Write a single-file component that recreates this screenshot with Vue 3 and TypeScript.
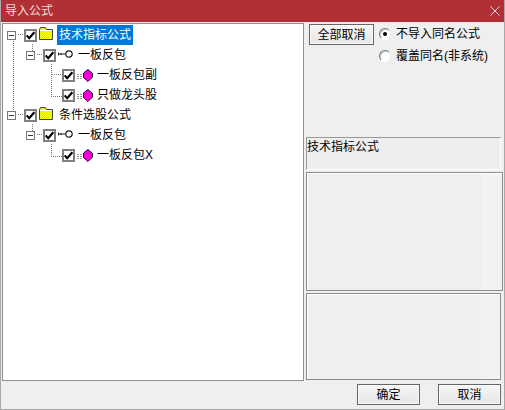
<script setup lang="ts">
interface Node { label: string; level: number; kind: 'folder' | 'key' | 'leaf'; expandable: boolean; selected?: boolean }
const nodes: Node[] = [
  { label: '技术指标公式', level: 0, kind: 'folder', expandable: true, selected: true },
  { label: '一板反包', level: 1, kind: 'key', expandable: true },
  { label: '一板反包副', level: 2, kind: 'leaf', expandable: false },
  { label: '只做龙头股', level: 2, kind: 'leaf', expandable: false },
  { label: '条件选股公式', level: 0, kind: 'folder', expandable: true },
  { label: '一板反包', level: 1, kind: 'key', expandable: true },
  { label: '一板反包X', level: 2, kind: 'leaf', expandable: false },
]
</script>

<template>
  <div class="dialog">
    <header class="titlebar">
      <span>导入公式</span>
      <svg class="close" width="10" height="10" viewBox="0 0 10 10"><path d="M0.5 0.5L9.5 9.5M9.5 0.5L0.5 9.5" stroke="#f0d8d8" fill="none" /></svg>
    </header>
    <div class="body">
      <div class="tree">
        <svg class="lines" width="120" height="160" viewBox="0 0 120 160">
          <g stroke="#777" stroke-dasharray="1 1" fill="none" shape-rendering="crispEdges">
            <path d="M10.5 15V92M15 10.5H21" />
            <path d="M29.5 20V28M34 30.5H40M48.5 40V72.5H59M48.5 50.5H59" />
            <path d="M29.5 100V108M15 90.5H21M34 110.5H40M48.5 120V132.5H59" />
          </g>
        </svg>
        <div v-for="(n, i) in nodes" :key="i" class="row" :class="`level${n.level}`">
          <span v-if="n.expandable" class="exp"><i></i></span>
          <span class="check">
            <svg width="9" height="9" viewBox="0 0 9 9"><path d="M0.6 4.4L3.2 7.2L8.4 1.2" stroke="#000" stroke-width="2.2" fill="none" /></svg>
          </span>
          <svg v-if="n.kind === 'folder'" class="ic folder" width="16" height="13" viewBox="0 0 16 13">
            <defs>
              <pattern :id="`dither${i}`" width="2" height="2" patternUnits="userSpaceOnUse">
                <rect width="2" height="2" fill="#ffff00" />
                <rect width="1" height="1" fill="#d8d870" />
                <rect x="1" y="1" width="1" height="1" fill="#d8d870" />
              </pattern>
            </defs>
            <path d="M1.5 2.5L2.5 0.5H7.5L8.5 2.5H14.5V12.5H1.5Z" :fill="`url(#dither${i})`" stroke="#444" />
            <path d="M2 3.5H14" stroke="#fff" />
          </svg>
          <svg v-else-if="n.kind === 'key'" class="ic key" width="16" height="10" viewBox="0 0 16 10">
            <circle cx="12" cy="5" r="3.2" fill="#fff" stroke="#222" stroke-width="1.2" />
            <path d="M1 5H9M1.5 3.5V6.5M4 4V6" stroke="#222" fill="none" />
          </svg>
          <svg v-else class="ic" width="17" height="13" viewBox="0 0 17 13">
            <path d="M1 5.5H7M1 7.5H7M1 9.5H7" stroke="#999" stroke-dasharray="2 1" />
            <path d="M12 0.5L16.5 4.5V8L12 12.5L7.5 8.5V4Z" fill="#ff00dd" stroke="#300040" />
            <path d="M12 1V5L16 5M12 5L8 4.5" stroke="#b000b0" fill="none" stroke-width="0.6" />
          </svg>
          <span class="label" :class="`label-${n.kind}`">
            <span :class="{ selected: n.selected }">{{ n.label }}</span>
          </span>
        </div>
      </div>
      <aside class="side">
        <div class="options">
          <button class="btn all">全部取消</button>
          <div class="radios">
            <label class="radio"><span class="dot on"></span>不导入同名公式</label>
            <label class="radio"><span class="dot"></span>覆盖同名(非系统)</label>
          </div>
        </div>
        <div class="info">技术指标公式</div>
        <div class="box mid"></div>
        <div class="box low"></div>
      </aside>
    </div>
    <footer class="footer">
      <button class="btn ok">确定</button>
      <button class="btn cancel">取消</button>
    </footer>
  </div>
</template>

<style scoped>
.dialog {
  width: 505px;
  height: 410px;
  box-sizing: border-box;
  display: flex;
  flex-direction: column;
  background: #efefef;
  border: 1px solid #a8a8a8;
  border-top: 0;
  font: 12px/16px "Liberation Sans", "Noto Sans CJK SC", sans-serif;
  color: #000;
  overflow: hidden;
}
.titlebar {
  height: 22px;
  margin: 0 -1px;
  padding: 0 5px;
  flex: none;
  background: #b13035;
  color: #f3dede;
  display: flex;
  align-items: center;
  justify-content: space-between;
}
.close { margin-top: -1px; }
.body {
  flex: 1;
  min-height: 0;
  display: flex;
  padding: 1px 0 0 1px;
}
.tree {
  position: relative;
  width: 302px;
  height: 358px;
  box-sizing: border-box;
  border: 1px solid #8f8f8f;
  background: #fff;
  padding-top: 1px;
}
.lines { position: absolute; left: 0; top: 0; }
.row {
  position: relative;
  height: 20px;
  display: flex;
  align-items: center;
}
.level0 { padding-left: 4px; }
.level1 { padding-left: 23px; }
.level2 { padding-left: 59px; }
.exp {
  width: 9px;
  height: 9px;
  box-sizing: border-box;
  border: 1px solid #777;
  background: #fff;
  margin-right: 8px;
  display: flex;
  align-items: center;
  justify-content: center;
}
.exp i { width: 5px; height: 1px; background: #333; }
.check {
  width: 13px;
  height: 13px;
  box-sizing: border-box;
  border: 2px solid #808080;
  background: #fff;
  display: flex;
  align-items: center;
  justify-content: center;
  flex: none;
}
.ic { flex: none; margin-left: 1px; }
.folder { margin-top: -3px; }
.key { margin-top: -2px; }
.label { line-height: 16px; white-space: nowrap; display: flex; }
.label > span { padding: 2px; }
.label-folder { margin-left: 3px; }
.label-key { margin-left: 3px; }
.label-leaf { margin-left: 2px; }
.selected { background: #0078d7; color: #fff; }
.side {
  margin-left: 2px;
  width: 198px;
  display: flex;
  flex-direction: column;
}
.options {
  display: flex;
  height: 114px;
  padding: 1px 0 0 3px;
  box-sizing: border-box;
}
.btn {
  box-sizing: border-box;
  font: inherit;
  color: #000;
  height: 21px;
  padding: 0;
  border: 1px solid #666;
  background: linear-gradient(#f6f6f6, #e6e6e6);
  box-shadow: inset 0 0 0 1px #fafafa;
}
.all { width: 65px; flex: none; }
.radios { margin-left: 5px; display: flex; flex-direction: column; gap: 6px; padding-top: 2px; }
.radio { display: flex; align-items: center; gap: 5px; height: 16px; }
.dot {
  width: 12px;
  height: 12px;
  box-sizing: border-box;
  border-radius: 50%;
  background: #fff;
  border: 1px solid;
  border-color: #777 #e8e8e8 #fff #777;
  box-shadow: inset 1px 1px 0 #cfcfcf;
  display: flex;
  align-items: center;
  justify-content: center;
}
.dot.on::after { content: ""; width: 4px; height: 4px; border-radius: 50%; background: #000; }
.info {
  height: 33px;
  box-sizing: border-box;
  width: 195px;
  background: #eee;
  border: 1px solid #fff;
  border-top-color: #999;
  border-left-color: #999;
  line-height: 18px;
}
.box {
  box-sizing: border-box;
  border: 1px solid #8c8c8c;
  background: linear-gradient(90deg, #efefef 90%, #f3f2f0 90%);
  box-shadow: inset 1px 1px 0 #fff;
}
.mid { margin-top: 2px; width: 197px; height: 120px; }
.low { margin-top: 2px; width: 195px; height: 87px; }
.footer {
  flex: none;
  height: 29px;
  display: flex;
  justify-content: flex-end;
  padding: 4px 3px 0 0;
  box-sizing: border-box;
  gap: 18px;
}
.ok, .cancel { width: 63px; }
</style>
